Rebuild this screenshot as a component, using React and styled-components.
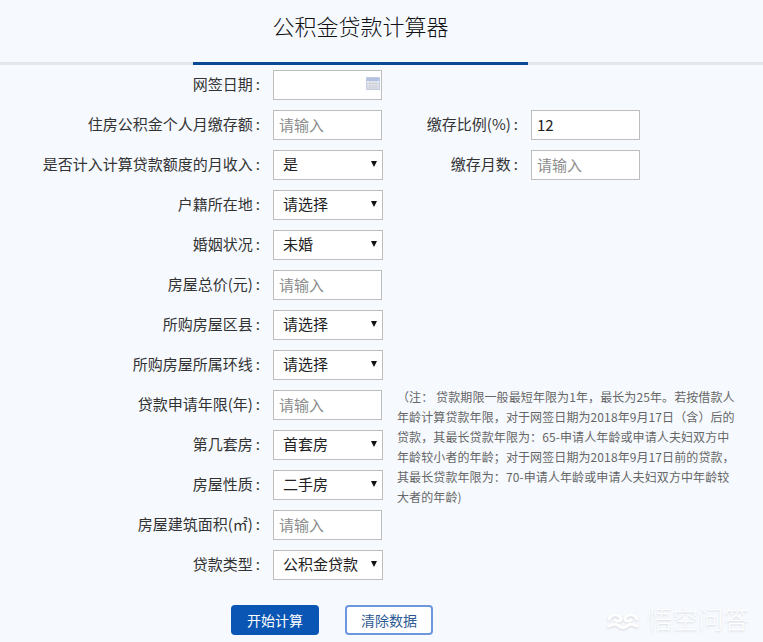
import React from 'react';
import styled, { createGlobalStyle } from 'styled-components';

const Global = createGlobalStyle`
  html, body { margin: 0; padding: 0; background: #f6faff; }
  body { font-family: "Noto Sans CJK SC", "Liberation Sans", sans-serif; color: #333; }
  input::placeholder { color: #8d8d8d; opacity: 1; }
`;
const Page = styled.div`
  width: 763px; height: 642px; overflow: hidden; position: relative; background: #f6faff;
`;
const Header = styled.header`
  height: 62px; border-bottom: 3px solid #e4e7ea; display: flex; justify-content: center; position: relative;
`;
const TitleTab = styled.div`
  width: 335px; margin-left: -42px; margin-bottom: -3px; border-bottom: 3px solid #0b4a92;
  display: flex; justify-content: center;
`;
const Title = styled.h1`
  margin: 8px 0 0; font-size: 22px; line-height: 34px; font-weight: 300; color: #111;
`;
const Form = styled.form`
  display: flex; padding-top: 5px;
`;
const LeftColumn = styled.div`
  width: 383px; flex: none; display: flex; flex-direction: column;
`;
const RightColumn = styled.div`
  display: flex; flex-direction: column; padding-left: 14px;
`;
const Row = styled.div`
  height: 30px; margin-bottom: 10px; display: flex; align-items: center; justify-content: flex-end; flex: none;
`;
const SideRow = styled(Row)`
  width: 243px;
  margin-top: ${p => p.$top || 0}px;
`;
const Label = styled.label`
  font-size: 15px; line-height: 30px; color: #333; margin: 0 13px 3px 0; white-space: nowrap;
`;
const Colon = styled.span`
  margin-left: 3px;
`;
const Field = styled.div`
  width: ${p => p.$w || 109}px; height: 30px; box-sizing: border-box; position: relative; flex: none;
`;
const Input = styled.input`
  width: 109px; height: 30px; box-sizing: border-box; border: 1px solid #bdbdbd; background: #fff;
  padding: 0 5px 2px; font: 15px "Noto Sans CJK SC", sans-serif; color: #222; outline: none; display: block;
`;
const Select = styled.select`
  appearance: none; width: 110px; height: 30px; box-sizing: border-box; border: 1px solid #bdbdbd; background: #fff;
  padding: 0 9px 3px; font: 15px "Noto Sans CJK SC", sans-serif; color: #222; outline: none; display: block;
`;
const Arrow = styled.span`
  position: absolute; right: 6px; top: 11px; width: 0; height: 0; pointer-events: none;
  border-left: 3.5px solid transparent; border-right: 3.5px solid transparent; border-top: 6px solid #111;
`;
const CalIcon = styled.svg`
  position: absolute; right: 3px; top: 7px; width: 14px; height: 13px;
`;
const Note = styled.p`
  margin: 197px 0 0; width: 345px; font-size: 12px; line-height: 20px; color: #666; letter-spacing: 0.1px;
`;
const NoteLine = styled.span`
  display: block; white-space: pre;
`;
const Actions = styled.div`
  display: flex; gap: 26px; margin: 15px 0 0 231px;
`;
const Button = styled.button`
  width: 88px; height: 30px; box-sizing: border-box; border-radius: 4px; font: 14px "Noto Sans CJK SC", sans-serif; cursor: pointer; padding: 0;
  background: ${p => (p.$primary ? '#0a56b4' : '#fff')};
  color: ${p => (p.$primary ? '#fff' : '#2c5a94')};
  border: ${p => (p.$primary ? '0' : '2px solid #6d97dc')};
`;
const Watermark = styled.div`
  position: absolute; right: 14px; bottom: 9px; display: flex; align-items: center; gap: 8px;
  color: #fff; font-size: 25.5px; line-height: 30px; font-weight: 300; text-shadow: 0 1px 2px #d4d6da;
`;
const WatermarkLogo = styled.svg`
  width: 32px; height: 20px; filter: drop-shadow(0 1px 1px #d4d6da); margin-top: 3px;
`;

const Calendar = () => (
  <CalIcon viewBox="0 0 14 13">
    <rect x="0.5" y="0.5" width="13" height="12" fill="#e6ebf6" stroke="#c3cde2" />
    <rect x="1" y="1" width="12" height="3" fill="#b3c2e2" />
    <path d="M1 6.5h12M1 9h12M1 11h12M4 4v8M7 4v8M10 4v8" stroke="#cfcfd6" strokeWidth="1" fill="none" />
  </CalIcon>
);

const Text = ({ label, value, placeholder = '\u8bf7\u8f93\u5165' }) => (
  <Field>
    <Input id={label} defaultValue={value} placeholder={value ? undefined : placeholder} />
  </Field>
);
const Drop = ({ value }) => (
  <Field $w={110}>
    <Select defaultValue={value}><option>{value}</option></Select>
    <Arrow />
  </Field>
);

const rows = [
  ['网签日期', 'date'],
  ['住房公积金个人月缴存额', 'text'],
  ['是否计入计算贷款额度的月收入', 'select', '是'],
  ['户籍所在地', 'select', '请选择'],
  ['婚姻状况', 'select', '未婚'],
  ['房屋总价(元)', 'text'],
  ['所购房屋区县', 'select', '请选择'],
  ['所购房屋所属环线', 'select', '请选择'],
  ['贷款申请年限(年)', 'text'],
  ['第几套房', 'select', '首套房'],
  ['房屋性质', 'select', '二手房'],
  ['房屋建筑面积(㎡)', 'text'],
  ['贷款类型', 'select', '公积金贷款'],
];
const noteLines = [
  '\uFF08注\uFF1A 贷款期限一般最短年限为1年\uFF0C最长为25年。若按借款人',
  '年龄计算贷款年限\uFF0C对于网签日期为2018年9月17日\uFF08含\uFF09后的',
  '贷款\uFF0C其最长贷款年限为\uFF1A65-申请人年龄或申请人夫妇双方中',
  '年龄较小者的年龄\uFF1B对于网签日期为2018年9月17日前的贷款\uFF0C',
  '其最长贷款年限为\uFF1A70-申请人年龄或申请人夫妇双方中年龄较',
  '大者的年龄)',
];

export default function App() {
  return (
    <Page>
      <Global />
      <Header>
        <TitleTab><Title>公积金贷款计算器</Title></TitleTab>
      </Header>
      <Form>
        <LeftColumn>
          {rows.map(([label, type, value]) => (
            <Row key={label}>
              <Label htmlFor={label}>{label}<Colon>:</Colon></Label>
              {type === 'select' ? <Drop value={value} /> : (
                <Field $w={110}>
                  {type === 'date' ? <Input id={label} /> : <Text label={label} />}
                  {type === 'date' && <Calendar />}
                </Field>
              )}
            </Row>
          ))}
        </LeftColumn>
        <RightColumn>
          <SideRow $top={40}>
            <Label>缴存比例(%)<Colon>:</Colon></Label><Text label="ratio" value="12" />
          </SideRow>
          <SideRow>
            <Label>缴存月数<Colon>:</Colon></Label><Text label="months" />
          </SideRow>
          <Note>{noteLines.map(l => <NoteLine key={l}>{l}</NoteLine>)}</Note>
        </RightColumn>
      </Form>
      <Actions>
        <Button type="button" $primary>开始计算</Button>
        <Button type="button">清除数据</Button>
      </Actions>
      <Watermark>
        <WatermarkLogo viewBox="0 0 32 20" fill="none" stroke="#fff" strokeWidth="3" strokeLinecap="round">
          <path d="M2 9c2-5 9-6 12-1 1 3-4 4-6 2M30 9c-2-5-9-6-12-1-1 3 4 4 6 2M2 16c4-2 8-2 10 0s6 2 8 0 6-2 10 0" />
        </WatermarkLogo>
        悟空问答
      </Watermark>
    </Page>
  );
}
